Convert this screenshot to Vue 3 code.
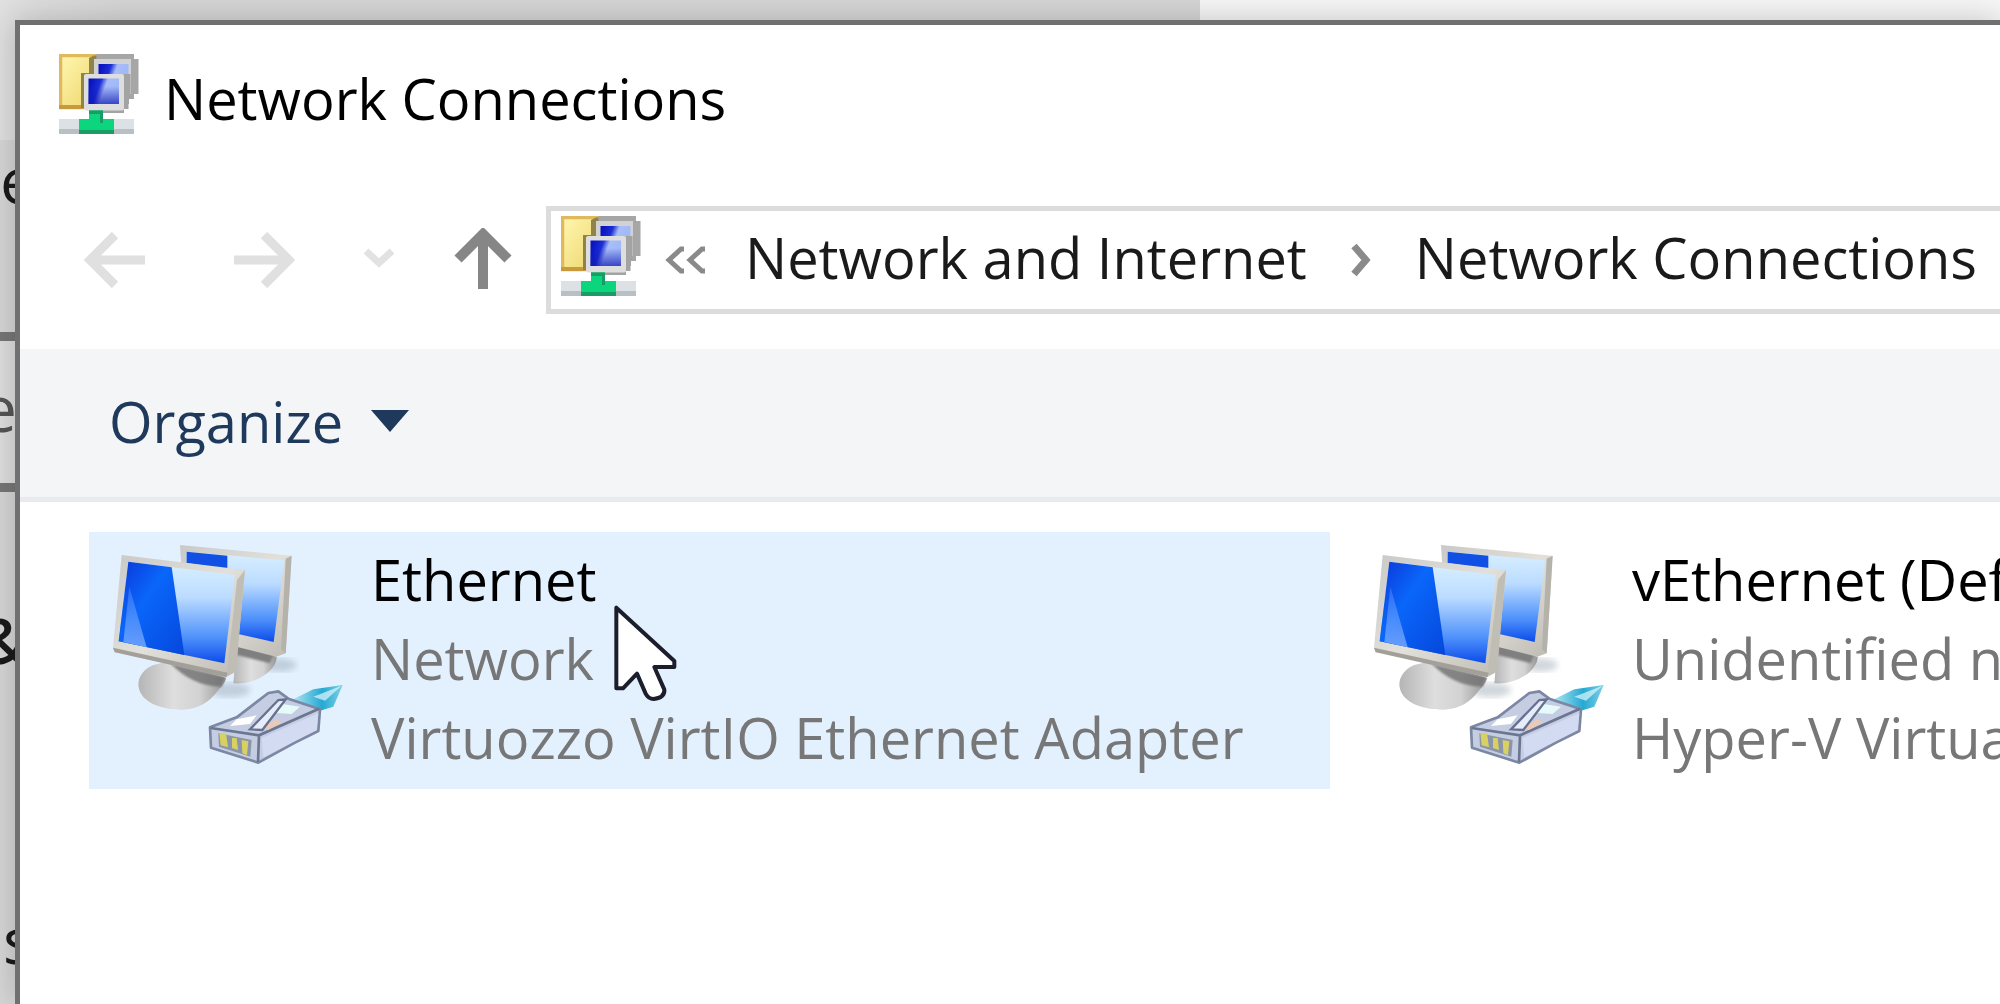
<script setup>
import { ref } from "vue";

const connections = [
  {
    id: 1,
    name: "Ethernet",
    status: "Network",
    device: "Virtuozzo VirtIO Ethernet Adapter",
  },
  {
    id: 2,
    name: "vEthernet (Def",
    status: "Unidentified n",
    device: "Hyper-V Virtua",
  },
];

// hovered tile
const active = ref(1);
</script>

<template>
  <div class="desktop">
    <!-- page behind the window -->
    <div class="behind">
      <div class="behind-top"></div>
      <p class="behind-text">e</p>
      <div class="behind-field"><span>e</span></div>
      <p class="behind-text amp"><span>&amp;</span></p>
      <p class="behind-text last">s</p>
    </div>

    <svg class="defs" aria-hidden="true">
      <defs>
        <linearGradient id="folder" x1="0" y1="0" x2="1" y2="1">
          <stop offset="0" stop-color="#fff6b0" />
          <stop offset="1" stop-color="#ecd468" />
        </linearGradient>
        <linearGradient id="smallScreen" x1="0" y1="0" x2="1" y2="0.3">
          <stop offset="0.1" stop-color="#0a14c0" />
          <stop offset="0.4" stop-color="#1c2fd6" />
          <stop offset="0.6" stop-color="#a9bdf8" />
          <stop offset="1" stop-color="#9fb8f8" />
        </linearGradient>
        <linearGradient id="smallShade" x1="0" y1="0" x2="0" y2="1">
          <stop offset="0.3" stop-color="#0a14b0" stop-opacity="0" />
          <stop offset="1" stop-color="#0a14b0" stop-opacity="0.7" />
        </linearGradient>
        <linearGradient id="screenDark" x1="0" y1="0" x2="1" y2="1">
          <stop offset="0" stop-color="#0a36d8" />
          <stop offset="0.4" stop-color="#0a66fa" />
          <stop offset="1" stop-color="#0647dc" />
        </linearGradient>
        <linearGradient id="screenLight" x1="0" y1="0" x2="0" y2="1">
          <stop offset="0" stop-color="#d8efff" />
          <stop offset="0.35" stop-color="#bcdcff" />
          <stop offset="0.75" stop-color="#4d90fb" />
          <stop offset="1" stop-color="#0b4bea" />
        </linearGradient>
        <linearGradient id="glint" x1="0" y1="0" x2="0" y2="1">
          <stop offset="0" stop-color="#6fa4ff" stop-opacity="0.3" />
          <stop offset="1" stop-color="#7eaeff" stop-opacity="0.8" />
        </linearGradient>
        <linearGradient id="bezel" x1="0" y1="0" x2="1" y2="1">
          <stop offset="0" stop-color="#c9c9c7" />
          <stop offset="0.5" stop-color="#e2e0da" />
          <stop offset="1" stop-color="#bdbab3" />
        </linearGradient>
        <linearGradient id="stand" x1="0" y1="0" x2="1" y2="0">
          <stop offset="0" stop-color="#b5b5b5" />
          <stop offset="0.4" stop-color="#dedede" />
          <stop offset="0.7" stop-color="#d2d2d2" />
          <stop offset="1" stop-color="#959595" />
        </linearGradient>
        <linearGradient id="cable" x1="0" y1="0" x2="1" y2="0">
          <stop offset="0" stop-color="#b4e6f2" />
          <stop offset="0.6" stop-color="#25a9d2" />
          <stop offset="1" stop-color="#7fd0e6" />
        </linearGradient>
        <filter id="soft"><feGaussianBlur stdDeviation="3" /></filter>
        <filter id="shadow"><feGaussianBlur stdDeviation="9" /></filter>

        <symbol id="netFolder" viewBox="0 0 16 16">
          <rect x="0.3" y="0.3" width="8" height="10.4" fill="url(#folder)" stroke="#e0b95c" stroke-width="0.7" />
          <path d="M0 10.6h5" stroke="#c99a3c" stroke-width="0.8" />
          <path d="M7 0.3h2v1h-2v3h-2v6.5h-.6v-7h1.6v-3z" fill="#8f8345" />
          <path d="M7.5 0H15v1h.9v7H15v1h-1v1h-1V9H7z" fill="#a6a6a6" />
          <path d="M7 1h7.4v7H7z" fill="#d2d2d2" />
          <rect x="7.9" y="2" width="6" height="5" fill="url(#smallScreen)" />
          <path d="M13 5h1v2h-1z" fill="#2a44cf" />
          <path d="M6 11.8h7V11h.9V9h.4V4h-2v7H6z" fill="#a3a3a3" />
          <rect x="5" y="4" width="8" height="7.3" rx="0.4" fill="#dedede" />
          <rect x="5.9" y="4.9" width="6.1" height="5.1" fill="url(#smallScreen)" />
          <rect x="5.9" y="4.9" width="6.1" height="5.1" fill="url(#smallShade)" />
          <path d="M0 13h15v2H0z" fill="#dbe1e4" />
          <path d="M0 15h15v1H0z" fill="#b9c0c4" />
          <path d="M6 11.3h2.8V13H11v3H4v-3h2z" fill="#0bd67d" />
          <path d="M6 11.3h2.8v.7H6zM8.2 12h.6v1.8h-.6zM4 15.2h7v.8H4z" fill="#1a9c66" />
        </symbol>

        <symbol id="adapter" viewBox="60 30 720 690">
          <!-- back monitor -->
          <ellipse cx="570" cy="405" rx="50" ry="20" fill="#8b9aa8" opacity="0.4" filter="url(#shadow)" />
          <path d="M440 345l120 35c0 40-60 85-130 80z" fill="url(#stand)" />
          <path d="M440 345l110 30-10 25-100-25z" fill="#7f7f7f" filter="url(#soft)" />
          <path d="M270 45l335 32-18 293-28 10-120-30-165-240z" fill="url(#bezel)" />
          <path d="M605 77l-18 293-14-12 14-272z" fill="#b5b2ab" />
          <path d="M290 65l293 26-32 245-110-25-30-200-121-20z" fill="url(#screenLight)" />
          <path d="M290 65l122 12v40l-122-18z" fill="#1150e4" />
          <!-- front monitor -->
          <ellipse cx="420" cy="480" rx="60" ry="22" fill="#8b9aa8" opacity="0.4" filter="url(#shadow)" />
          <path d="M190 405c-35 15-52 45-42 75 14 42 75 60 130 59 50-2 80-25 100-50 15-18 28-30 30-45l-170-50z" fill="url(#stand)" />
          <path d="M240 400l165 42-10 28c-60 0-110-25-155-70z" fill="#6f6f6f" opacity="0.8" filter="url(#soft)" />
          <path d="M95 75l370 45-28 305-28 15-335-75-5-12z" fill="url(#bezel)" />
          <path d="M465 120l-28 305-28 15 32-290z" fill="#c0bdb5" />
          <path d="M69 353l5 14 335 75 4-14z" fill="#a3a09a" />
          <path d="M115 95l320 40-32 265-317-66z" fill="url(#screenLight)" />
          <path d="M115 95l130 17 38 263-197-41z" fill="url(#screenDark)" />
          <path d="M118 170l52 182-70-16z" fill="url(#glint)" />
          <!-- plug -->
          <path d="M690 560h55" stroke="#8d99a8" stroke-width="10" opacity="0.4" filter="url(#soft)" />
          <path d="M605 510l65-32 88-13-28 65-60 18-40-15z" fill="url(#cable)" />
          <path d="M670 500l85-33-50 45z" fill="#dff6fb" opacity="0.7" />
          <path d="M360 592l80-30 95-73 30-5 30 22 95 32-5 65-70 35-110 60-142-45z" fill="#c4cde2" stroke="#7c87a3" stroke-width="8" stroke-linejoin="round" />
          <path d="M362 594l145 22 180-80M507 616l-3 80" fill="none" stroke="#6b7692" stroke-width="8" />
          <path d="M515 624l170-74-5 50-160 82z" fill="#d3dbf2" />
          <path d="M440 568l60-12-20 26-60 6z" fill="#fff" />
          <path d="M548 548l30-26 52 8-25 22z" fill="#e6fafb" />
          <path d="M515 592l45-24 14 10-40 22z" fill="#ecc9b6" />
          <path d="M480 598l85-88 22-2-70 92z" fill="#e7ecfa" stroke="#66718f" stroke-width="7" />
          <path d="M385 610l100 20-4 50-94-30z" fill="#8a95ab" />
          <path d="M388 610h20l6 42-22-6zM426 624h14l4 36-18-6zM455 630l20 4-4 42-14-6z" fill="#d8d060" />
        </symbol>
      </defs>
    </svg>

    <main class="window">
      <header class="titlebar">
        <svg class="net-icon"><use href="#netFolder" /></svg>
        <h1>Network Connections</h1>
      </header>

      <nav class="navbar">
        <button class="nav-btn" aria-label="Back" disabled>
          <svg width="62" height="56" viewBox="0 0 62 56">
            <path d="M5 28h56M31 3L6 28l25 25" stroke="#e0e0e0" stroke-width="9" />
          </svg>
        </button>
        <button class="nav-btn" aria-label="Forward" disabled>
          <svg width="62" height="56" viewBox="0 0 62 56">
            <path d="M1 28h56M31 3l25 25-25 25" stroke="#e0e0e0" stroke-width="9" />
          </svg>
        </button>
        <button class="nav-btn recent" aria-label="Recent locations" disabled>
          <svg width="32" height="24" viewBox="0 0 32 24">
            <path d="M3 3l13 12L29 3" stroke="#e2e2e2" stroke-width="7" />
          </svg>
        </button>
        <button class="nav-btn up" aria-label="Up">
          <svg width="58" height="64" viewBox="0 0 58 64">
            <path d="M29 61V6M4 31L29 6l25 25" stroke="#868686" stroke-width="10" />
          </svg>
        </button>
        <div class="address">
          <svg class="net-icon"><use href="#netFolder" /></svg>
          <svg class="more" width="42" height="28" viewBox="0 0 42 28">
            <path d="M19 3h-3L4 14l12 11h3M40 3h-3L25 14l12 11h3" stroke="#8a8a8a" stroke-width="5" />
          </svg>
          <button class="crumb">Network and Internet</button>
          <svg class="sep" width="20" height="36" viewBox="0 0 20 36">
            <path d="M3 4l12 14L3 32" stroke="#8a8a8a" stroke-width="7" />
          </svg>
          <button class="crumb">Network Connections</button>
        </div>
      </nav>

      <div class="toolbar">
        <button class="organize">
          Organize
          <svg width="38" height="22" viewBox="0 0 38 22">
            <path d="M0 0h38L19 22z" fill="#1e395b" />
          </svg>
        </button>
      </div>

      <ul class="list">
        <li
          v-for="item in connections"
          :key="item.id"
          class="tile"
          :class="{ active: active === item.id }"
          @mouseenter="active = item.id"
        >
          <svg class="adapter"><use href="#adapter" /></svg>
          <div class="info">
            <p class="name">{{ item.name }}</p>
            <p>{{ item.status }}</p>
            <p>{{ item.device }}</p>
          </div>
          <svg v-if="item.id === 1" class="cursor" viewBox="756 220 198 297">
            <path
              d="M769 234v242h20l42-44 26 60q8 16 24 16 34-4 32-28l-30-68h60v-18z"
              fill="#fff"
              stroke="#1c1e2c"
              stroke-width="12"
              stroke-linejoin="round"
            />
          </svg>
        </li>
      </ul>
    </main>
  </div>
</template>

<style>
body {
  margin: 0;
}
</style>

<style scoped>
.desktop {
  position: relative;
  display: flex;
  min-height: 100vh;
  overflow: hidden;
  box-sizing: border-box;
  padding: 20px 0 0 15px;
  background: #d6d6d6;
  font-family: "Open Sans", "Noto Sans", sans-serif;
  font-size: 56px;
  line-height: 79px;
}
p,
h1,
ul {
  margin: 0;
  padding: 0;
  font-size: inherit;
  font-weight: normal;
}
svg {
  display: block;
  flex: none;
  fill: none;
}
.defs {
  position: absolute;
  width: 0;
  height: 0;
}
button {
  padding: 0;
  border: 0;
  background: none;
  color: inherit;
  font: inherit;
  white-space: nowrap;
}

/* page behind */
.behind {
  position: absolute;
  inset: 0;
  font-size: 64px;
  color: #1a1a1a;
}
.behind-top {
  height: 140px;
  background: linear-gradient(to right, #e0e0e0, #d6d6d6 6%, #d6d6d6 60%, #f6f6f6 60%);
}
.behind-text {
  height: 192px;
}
.behind-field {
  display: flex;
  box-sizing: border-box;
  height: 160px;
  width: 17px;
  padding-bottom: 10px;
  align-items: center;
  justify-content: flex-end;
  border: solid #777;
  border-width: 9px 0;
  background: #dedede;
  color: #555;
}
.amp {
  display: flex;
  box-sizing: border-box;
  width: 27px;
  height: 408px;
  padding-top: 108px;
  justify-content: flex-end;
  font-weight: 600;
}
.last {
  height: auto;
  padding-left: 3px;
}

/* window */
.window {
  position: relative;
  flex: 1;
  min-width: 0;
  border: solid #707070;
  border-width: 5px 0 0 5px;
  background: #fff;
  color: #000;
  box-shadow: 0 0 30px rgba(0, 0, 0, 0.2);
}
.titlebar {
  display: flex;
  height: 146px;
  padding-left: 39px;
  align-items: center;
  gap: 25px;
}
.net-icon {
  width: 80px;
  height: 80px;
  margin-bottom: 8px;
}

.navbar {
  display: flex;
  height: 178px;
  padding-left: 20px;
  align-items: center;
}
.nav-btn {
  display: flex;
  flex: none;
  width: 149px;
  justify-content: center;
}
.recent {
  width: 82px;
}
.up {
  width: 126px;
}
.address {
  display: flex;
  flex: 1;
  min-width: 0;
  height: 98px;
  padding-left: 10px;
  align-items: center;
  overflow: hidden;
  border: 5px solid #dcdcdc;
  border-right: 0;
  color: #1a1a1a;
}
.crumb {
  padding-bottom: 6px;
}
.more {
  margin: 0 38px 0 24px;
}
.sep {
  margin: 0 44px;
}

.toolbar {
  display: flex;
  height: 148px;
  padding-left: 89px;
  align-items: center;
  border-bottom: 5px solid #e8eaed;
  background: #f4f5f7;
  color: #1e395b;
}
.organize {
  display: flex;
  padding-bottom: 4px;
  align-items: center;
  gap: 28px;
}

.list {
  display: grid;
  grid-template-columns: 1241px 1241px;
  gap: 20px;
  padding: 30px 0 0 69px;
  list-style: none;
  overflow: hidden;
}
.tile {
  position: relative;
  display: flex;
  gap: 21px;
  padding: 8px 21px 12px;
  color: #777;
  white-space: nowrap;
}
.active {
  background: #e3f1ff;
}
.adapter {
  width: 240px;
  height: 230px;
}
.name {
  color: #000;
}
.cursor {
  position: absolute;
  left: 523px;
  top: 71px;
  width: 66px;
  height: 99px;
}
</style>
